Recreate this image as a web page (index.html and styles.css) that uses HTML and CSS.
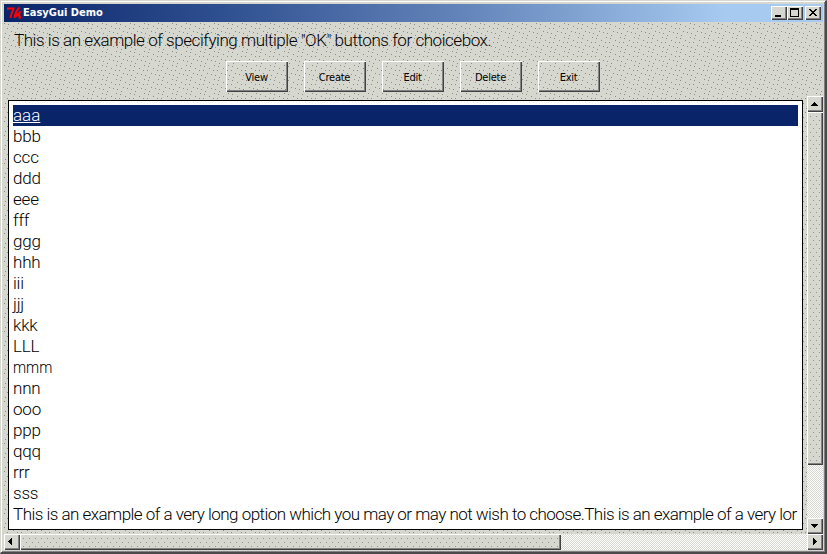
FILE: index.html
```html
<!DOCTYPE html>
<html lang="en">
<head>
<meta charset="utf-8">
<title>EasyGui Demo</title>
<link rel="stylesheet" href="styles.css">
</head>
<body>
<div class="window">
  <header class="titlebar">
    <svg class="logo" width="16" height="14" viewBox="0 0 16 14" fill="none" stroke="#ff0000" stroke-width="1.9"><path d="M.5 4V2.500H6.500C6 5 4 7 3.500 12M12.500 1.500C10 4 8 7 7.500 12M14 5.500L9.500 9h3v2.500h1.500M8 11l2-2"/></svg>
    <span class="title">EasyGui Demo</span>
    <span class="control"><svg width="16" height="14" shape-rendering="crispEdges"><path d="M4 9h6v2H4z"/></svg></span>
    <span class="control"><svg width="16" height="14" shape-rendering="crispEdges"><path fill-rule="evenodd" d="M3 2h9v9H3zM4 4v6h7V4z"/></svg></span>
    <span class="control close"><svg width="16" height="14" shape-rendering="crispEdges"><path d="M4 3h2v1h1v1h2V4h1V3h2v1h-1v1h-1v1H9v1h1v1h1v1h1v1h-2V9H9V8H7v1H6v1H4V9h1V8h1V7h1V6H6V5H5V4H4z"/></svg></span>
  </header>
  <main class="content">
    <p class="message"><span>This is an example of specifying multiple "OK" buttons for choicebox.</span></p>
    <div class="buttons">
      <button>View</button><button>Create</button><button>Edit</button><button>Delete</button><button>Exit</button>
    </div>
    <div class="choices">
      <ul class="list">
        <li class="selected"><u>aaa</u></li><li>bbb</li><li>ccc</li><li>ddd</li><li>eee</li><li>fff</li><li>ggg</li><li>hhh</li><li>iii</li><li>jjj</li><li>kkk</li><li>LLL</li><li class="wide">mmm</li><li>nnn</li><li>ooo</li><li>ppp</li><li>qqq</li><li>rrr</li><li>sss</li>
        <li class="long">This is an example of a very long option which you may or may not wish to choose.This is an example of a very lor</li>
      </ul>
      <div class="scroll vertical">
        <span class="arrow"><svg width="16" height="16" shape-rendering="crispEdges"><path d="M7 6h1v1h1v1h1v1h1v1H4V9h1V8h1V7h1z"/></svg></span>
        <span class="thumb"></span><span class="track"></span>
        <span class="arrow"><svg width="16" height="16" shape-rendering="crispEdges"><path d="M4 6h7v1h-1v1H9v1H8v1H7V9H6V8H5V7H4z"/></svg></span>
      </div>
    </div>
    <div class="scroll horizontal">
      <span class="arrow"><svg width="16" height="16" shape-rendering="crispEdges"><path d="M8 4v7H7v-1H6V9H5V8H4V7h1V6h1V5h1V4z"/></svg></span>
      <span class="thumb"></span><span class="track"></span>
      <span class="arrow"><svg width="16" height="16" shape-rendering="crispEdges"><path d="M6 4h1v1h1v1h1v1h1v1H9v1H8v1H7v1H6z"/></svg></span>
    </div>
  </main>
</div>
</body>
</html>
```
FILE: styles.css
```css
* { box-sizing: border-box; }
body { margin: 0; background: #d6d7ce; overflow: hidden; }
svg { display: block; }
.window {
  width: 827px; height: 554px; padding: 2px 0 0 2px;
  border: 1px solid #d6d7ce; border-right: 2px solid #4b494c; border-bottom: 2px solid #4b494c;
  box-shadow: inset 1px 1px #fff, inset -1px -1px #848284;
}
.titlebar {
  display: flex; align-items: center; height: 18px; margin: 1px 2px 0 1px; padding-right: 2px;
  background: linear-gradient(90deg, #0a246a, #2e4f8f 26%, #6788bd 58%, #a6caf0 88%);
  color: #fff; font: bold 11px/18px "DejaVu Sans Condensed", sans-serif;
}
.logo { margin-left: 3px; }
.title { flex: 1; }
.control { width: 16px; height: 14px; background: #d6d7ce; box-shadow: inset 1px 1px #fff, inset -1px -1px #424142, inset -2px -2px #848284; }
.close { margin-left: 2px; }
.content {
  --dot: conic-gradient(from 270deg at 1px 1px, #8c8c87 90deg, transparent 0);
  display: flex; flex-direction: column; height: 528px; margin: 0 2px 0 1px;
  /* dots arranged on descending diagonals */
  background-image: var(--dot), var(--dot), var(--dot), var(--dot), var(--dot), var(--dot), var(--dot), var(--dot), var(--dot);
  background-size: 14px 14px;
  background-position: 0 1px, 4px 2px, 9px 4px, 13px 6px, 3px 6px, 7px 9px, 11px 10px, 1px 11px, 5px 13px;
}
.message {
  height: 39px; margin: 0; padding: 6px 0 0 10px; white-space: nowrap;
  font: 300 17px/25px Roboto, sans-serif; color: #000; letter-spacing: -.45px;
}
.buttons { display: flex; gap: 16px; height: 31px; margin-left: 222px; }
button {
  width: 62px; height: 31px; padding: 1px 1px 0 0; border: 0;
  background: transparent; color: #000; font: 11px "DejaVu Sans Condensed", sans-serif; letter-spacing: -.25px;
  box-shadow: inset 1px 1px #fff, inset -1px -1px #424142, inset -2px -2px #848284;
}
.choices { display: flex; height: 442px; padding-top: 4px; }
.list {
  width: 795px; height: 430px; margin: 4px 4px 0 4px; padding: 4px; border: 1px solid #000;
  background: #fff; list-style: none; flex: none;
  font: 300 17px/21px Roboto, sans-serif; color: #000; letter-spacing: -.2px;
}
.list li { height: 21px; white-space: nowrap; }
.list .wide { letter-spacing: 0; transform: scaleX(.87); transform-origin: left; }
.list .long { letter-spacing: -.525px; }
.list .selected { background: #0a246a; color: #fff; letter-spacing: 0; }
.scroll { display: flex; background: #d6d7ce; flex: none; }
.vertical { flex-direction: column; width: 16px; height: 438px; }
.horizontal { width: 819px; height: 16px; }
.arrow { width: 16px; height: 16px; flex: none; background: #d6d7ce; box-shadow: inset 1px 1px #fff, inset -1px -1px #424142, inset -2px -2px #848284; }
.thumb {
  --dot: conic-gradient(from 270deg at 1px 1px, #92928e 90deg, transparent 0);
  flex: none; background: var(--dot) 3px 4px / 6px 8px, var(--dot) 6px 8px / 6px 8px;
  box-shadow: inset 1px 1px #fff, inset -1px -1px #424142, inset -2px -2px #848284;
}
.thumb { background-color: #d6d7ce; }
.vertical .thumb { height: 353px; }
.horizontal .thumb { width: 541px; }
.track { flex: 1; background: repeating-conic-gradient(#fff 0 25%, #d6d7ce 0 50%) 0 0 / 2px 2px; }
```
